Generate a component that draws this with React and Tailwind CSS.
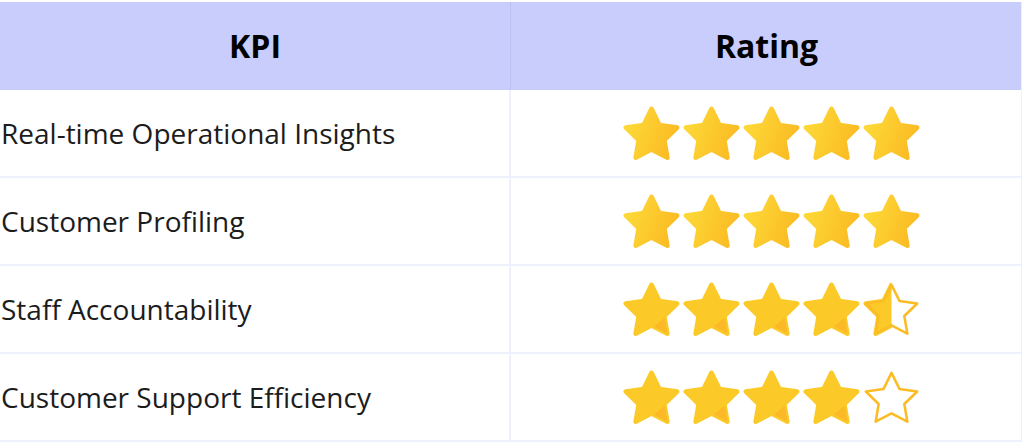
import React from "react";

const PTS = "12,2 15.09,8.26 22,9.27 17,14.14 18.18,21.02 12,17.77 5.82,21.02 7,14.14 2,9.27 8.91,8.26";

function Star({ kind, shade, id }) {
  return (
    <svg width="57" height="55" viewBox="0.9 0.9 22.2 21.4" className="block">
      <defs>
        <linearGradient id={`g${id}`} x1="0" y1="0" x2="1" y2="0.3">
          <stop offset="0" stopColor="#fddc3a" />
          <stop offset="1" stopColor="#fbbd25" />
        </linearGradient>
        <clipPath id={`h${id}`}>
          <rect x="0" y="0" width="12" height="24" />
        </clipPath>
        <clipPath id={`s${id}`}>
          <polygon points={PTS} stroke="#000" strokeWidth="1.8" strokeLinejoin="round" />
        </clipPath>
      </defs>
      {kind === "full" && !shade && (
        <polygon points={PTS} fill={`url(#g${id})`} stroke={`url(#g${id})`} strokeWidth="1.8" strokeLinejoin="round" />
      )}
      {kind === "full" && shade && (
        <g>
          <polygon points={PTS} fill="#fbca28" stroke="#fbca28" strokeWidth="1.8" strokeLinejoin="round" />
          <path
            d="M5.6 23 C10.5 20 16.5 16 23 9.6 L24 24 Z"
            fill="#fbb927"
            clipPath={`url(#s${id})`}
          />
        </g>
      )}
      {kind === "half" && (
        <g>
          <g clipPath={`url(#h${id})`}>
            <polygon points={PTS} fill="#fbca28" stroke="#fbca28" strokeWidth="1.8" strokeLinejoin="round" />
          </g>
          <polygon points={PTS} fill="none" stroke="#fbbd25" strokeWidth="1" strokeLinejoin="round" />
        </g>
      )}
      {kind === "empty" && (
        <polygon points={PTS} fill="none" stroke="#fbbd25" strokeWidth="1" strokeLinejoin="round" />
      )}
    </svg>
  );
}

const rows = [
  { label: "Real-time Operational Insights", stars: ["full", "full", "full", "full", "full"], shade: false },
  { label: "Customer Profiling", stars: ["full", "full", "full", "full", "full"], shade: false },
  { label: "Staff Accountability", stars: ["full", "full", "full", "full", "half"], shade: true },
  { label: "Customer Support Efficiency", stars: ["full", "full", "full", "full", "empty"], shade: true },
];

export default function App() {
  return (
    <div
      className="w-[1024px] h-[448px] bg-white pt-[2px] overflow-hidden"
      style={{ fontFamily: '"Open Sans", "Noto Sans", sans-serif' }}
    >
      <div className="w-[1022px] border-r border-[#eef0fc]">
        <div className="grid grid-cols-[511px_511px] h-[88px] bg-[#c8cdfb]">
          <div className="flex items-center justify-center border-r border-[#bcc1f4] text-[32px] font-bold text-black">
            KPI
          </div>
          <div className="flex items-center justify-center text-[32px] font-bold text-black">
            Rating
          </div>
        </div>
        {rows.map((r, i) => (
          <div key={i} className="grid grid-cols-[511px_511px] h-[88px] border-b-2 border-[#eef0fc]">
            <div className="flex items-center pl-[1px] border-r-2 border-[#eef0fc] text-[28px] text-[#1c1c1c]">
              {r.label}
            </div>
            <div className="flex items-center pl-[112px] gap-[3px]">
              {r.stars.map((k, j) => (
                <Star key={j} kind={k} shade={r.shade} id={`${i}-${j}`} />
              ))}
            </div>
          </div>
        ))}
      </div>
    </div>
  );
}
